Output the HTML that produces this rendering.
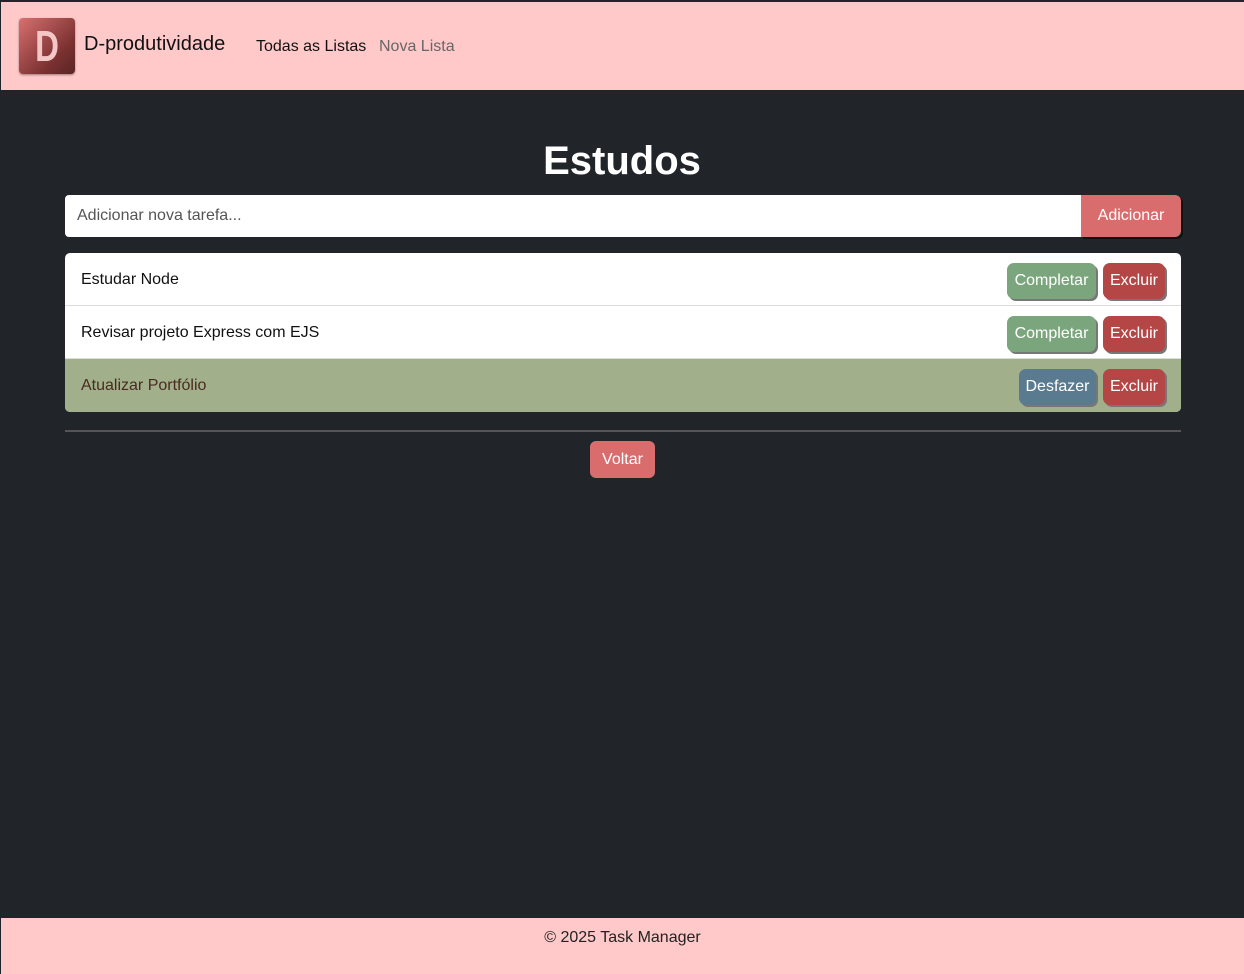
<!DOCTYPE html>
<html><head><meta charset="utf-8"><style>
*{box-sizing:border-box;margin:0;padding:0}
body{width:1244px;height:974px;background:#212429;font-family:"Liberation Sans","DejaVu Sans",sans-serif;position:relative;overflow:hidden}
.nav{position:absolute;left:1px;top:2px;width:1243px;height:88px;background:#ffc9c9}
.logo{position:absolute;left:18px;top:16px;width:56px;height:56px;border-radius:4px;background:linear-gradient(135deg,#d97070,#7a3030 70%,#5a2525);box-shadow:0 1px 2px rgba(0,0,0,.4)}
.logo span{position:absolute;left:0;right:0;top:4px;text-align:center;font-size:44px;font-weight:bold;color:#f4c7c7;transform:scaleX(.75)}
.brand{position:absolute;left:83px;top:31px;font-size:20px;color:#111}
.l1{position:absolute;left:255px;top:36px;font-size:16px;color:#111}
.l2{position:absolute;left:378px;top:36px;font-size:16px;color:#666}
h1{position:absolute;left:0;right:0;top:139px;text-align:center;color:#fff;font-size:40px;font-weight:bold}
.inp{position:absolute;left:65px;top:195px;width:1017px;height:42px;background:#fff;border-radius:4px 0 0 4px;font-size:16px;color:#555;padding:12px 12px}
.add{position:absolute;left:1081px;top:195px;width:100px;height:42px;background:#d96c6c;border-radius:0 6px 6px 0;color:#fff;font-size:16px;text-align:center;line-height:42px;box-shadow:2px 2px 0 #111}
.list{position:absolute;left:65px;top:253px;width:1116px;height:159px;background:#fff;border-radius:5px;overflow:hidden}
.row{position:absolute;left:0;width:100%;height:53px;font-size:16px;color:#111;padding:18px 16px;border-bottom:1px solid #ddd}
.row.done{background:#a1b08a;color:#4a2a22;border:none}
.b{position:absolute;top:10px;height:36px;border-radius:7px;color:#fff;font-size:16px;text-align:center;line-height:35px;box-shadow:2px 2px 0 #777}
.c{left:942px;width:89px;background:#7ba67d}
.x{left:1038px;width:62px;background:#b54646}
.d{left:954px;width:77px;background:#5a7b8f}
.hr{position:absolute;left:65px;top:430px;width:1116px;height:2px;background:#555}
.back{position:absolute;left:590px;top:441px;width:65px;height:37px;background:#d96c6c;border-radius:6px;color:#fff;font-size:16px;text-align:center;line-height:37px}
.foot{position:absolute;left:1px;top:918px;width:1243px;height:56px;background:#ffc9c9;text-align:center;font-size:16px;color:#222;padding-top:11px}
</style></head><body>
<div class="nav"><div class="logo"><span>D</span></div><div class="brand">D-produtividade</div><div class="l1">Todas as Listas</div><div class="l2">Nova Lista</div></div>
<h1>Estudos</h1>
<div class="inp">Adicionar nova tarefa...</div><div class="add">Adicionar</div>
<div class="list">
<div class="row" style="top:0">Estudar Node<div class="b c">Completar</div><div class="b x">Excluir</div></div>
<div class="row" style="top:53px">Revisar projeto Express com EJS<div class="b c">Completar</div><div class="b x">Excluir</div></div>
<div class="row done" style="top:106px">Atualizar Portfólio<div class="b d">Desfazer</div><div class="b x">Excluir</div></div>
</div>
<div class="hr"></div>
<div class="back">Voltar</div>
<div class="foot">© 2025 Task Manager</div>
</body></html>
